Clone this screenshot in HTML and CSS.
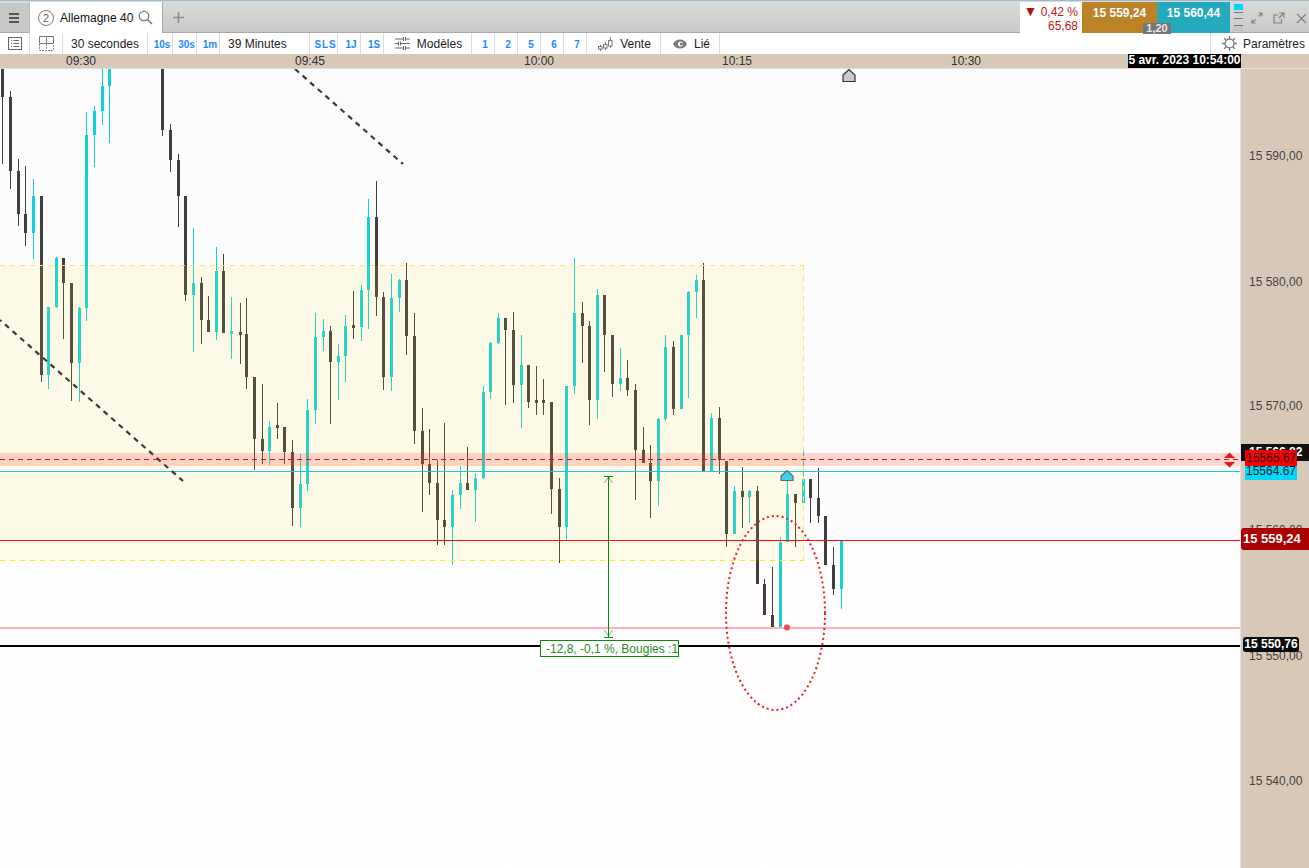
FILE: index.html
```html
<!DOCTYPE html>
<html lang="fr">
<head>
<meta charset="utf-8">
<title>Allemagne 40</title>
<link rel="stylesheet" href="styles.css">
</head>
<body>
<div class="app">
  <header class="tabbar">
    <button class="menu" aria-label="Menu">
      <svg width="10" height="10" viewBox="0 0 10 10"><path d="M0 1H10M0 5H10M0 9H10" stroke="#555" stroke-width="2"/></svg>
    </button>
    <div class="tab">
      <span class="tab-num">2</span>
      <span class="tab-name">Allemagne 40</span>
      <svg class="tab-search" width="15" height="15" viewBox="0 0 15 15"><circle cx="6" cy="6" r="4.7" fill="none" stroke="#777" stroke-width="1.3"/><path d="M9.5 9.5L14 14" stroke="#777" stroke-width="1.5"/></svg>
    </div>
    <svg class="tab-add" width="11" height="11" viewBox="0 0 11 11"><path d="M5.5 0V11M0 5.5H11" stroke="#8f8f8f" stroke-width="1.6"/></svg>
    <div class="quote">
      <div class="change"><span><span class="down">▼</span> 0,42 %</span><span>65,68</span></div>
      <div class="bid">15 559,24</div>
      <div class="ask">15 560,44</div>
      <div class="spread">1,20</div>
    </div>
    <div class="levels"><i class="lv-on"></i><i class="lv-a"></i><i class="lv-b"></i><i class="lv-c"></i><i class="lv-end"></i></div>
    <div class="winbtns">
      <svg width="12" height="12" viewBox="0 0 12 12"><path d="M1 11L4.5 7.5M11 1L7.5 4.5M1 7.5V11H4.5M7.5 1H11V4.5" fill="none" stroke="#808080" stroke-width="1.1"/></svg>
      <svg width="12" height="12" viewBox="0 0 12 12"><path d="M8.5 7V11H1V3H5M6 1H11V6M11 1L6 6" fill="none" stroke="#808080" stroke-width="1.1"/></svg>
      <svg width="12" height="12" viewBox="0 0 12 12"><path d="M2 2L11 11M11 2L2 11" stroke="#808080" stroke-width="1.2"/></svg>
    </div>
  </header>

  <nav class="toolbar">
    <div class="cell w30"><svg width="14" height="13" viewBox="0 0 14 13"><rect x=".5" y=".5" width="13" height="12" fill="none" stroke="#666"/><path d="M3 3.5H4M5.5 3.5H11M3 6.500H4M5.5 6.500H11M3 9.500H4M5.5 9.500H11" stroke="#666"/></svg></div>
    <div class="cell w33"><svg width="15" height="15" viewBox="0 0 15 15"><path d="M.5 7.500V.5H7.500V7.500H.5M7.500 .5H14.500V7.500H7.500" fill="none" stroke="#777"/><path d="M.5 8V14.500H14.500V8M7.500 8V14" fill="none" stroke="#888" stroke-dasharray="2 1"/></svg></div>
    <div class="cell w85">30 secondes</div>
    <div class="cell w25 blue">10s</div>
    <div class="cell w24 blue">30s</div>
    <div class="cell w23 blue">1m</div>
    <div class="cell w90">39 Minutes</div>
    <div class="cell w28 blue sls">SLS</div>
    <div class="cell w23 blue">1J</div>
    <div class="cell w23 blue">1S</div>
    <div class="cell w88 gap">
      <svg width="15" height="13" viewBox="0 0 15 13"><path d="M0 2H8M11 2H15M0 6.500H3M6 6.500H15M0 11H8M11 11H15" stroke="#666"/><path d="M8.500 0V4M10.500 0V4M3.500 4.500V8.500M5.500 4.500V8.500M8.500 9V13M10.500 9V13" stroke="#666"/></svg>
      <span>Modèles</span>
    </div>
    <div class="cell w23 blue">1</div>
    <div class="cell w23 blue">2</div>
    <div class="cell w23 blue">5</div>
    <div class="cell w23 blue">6</div>
    <div class="cell w23 blue">7</div>
    <div class="cell w74 gap">
      <svg width="15" height="14" viewBox="0 0 15 14"><path d="M2.500 8V9M2.500 12V14M7.500 5V7M7.500 11V13M12.500 0V3M12.500 9V11" stroke="#777"/><rect x=".5" y="9.500" width="3.500" height="2.500" fill="none" stroke="#777"/><rect x="5.500" y="7.500" width="3.500" height="3.500" fill="none" stroke="#777"/><rect x="10.500" y="3.500" width="3.500" height="5.500" fill="none" stroke="#777"/></svg>
      <span>Vente</span>
    </div>
    <div class="cell w59 gap">
      <svg width="14" height="10" viewBox="0 0 14 10"><path d="M0 5C3 -1 11 -1 14 5C11 11 3 11 0 5Z" fill="#777"/><circle cx="7.500" cy="5" r="2.600" fill="#fff"/><circle cx="8.300" cy="5" r="1.500" fill="#777"/></svg>
      <span>Lié</span>
    </div>
    <div class="toolbar-fill"></div>
    <div class="cell settings">
      <svg width="15" height="15" viewBox="0 0 15 15"><circle cx="7.500" cy="7.500" r="4.400" fill="none" stroke="#777" stroke-width="1.300"/><path d="M7.500 0V3M7.500 12V15M0 7.500H3M12 7.500H15M2.200 2.200L4.200 4.200M10.800 10.800L12.800 12.800M2.200 12.800L4.200 10.800M10.800 4.200L12.800 2.200" stroke="#777" stroke-width="1.300"/></svg>
      <span>Paramètres</span>
    </div>
  </nav>

  <div class="timeaxis">
    <span class="tick t1">09:30</span>
    <span class="tick t2">09:45</span>
    <span class="tick t3">10:00</span>
    <span class="tick t4">10:15</span>
    <span class="tick t5">10:30</span>
    <span class="cursor-date">5 avr. 2023 10:54:00</span>
  </div>

  <main class="chart">
    <div class="plot">
      <svg class="plot-svg" width="1241" height="799" viewBox="0 69 1241 799">
        <!-- ellipse fill -->
        <ellipse cx="775.500" cy="613" rx="49.500" ry="97" fill="#fffcfe"/>
        <g shape-rendering="crispEdges" fill="none">
          <!-- wicks -->
          <path stroke="#423e40" d="M2.500 69V164M10.500 91V189M18.500 159V226M25.500 166V246M41.500 196V382M63.500 258V339M71.500 283V401M162.500 69V136M170.500 124V172M178.500 154V227M185.500 196V301M201.500 277V344M208.500 296V332M223.500 254V333M240.500 303V364M246.500 298V389M254.500 377V470M262.500 384V464M277.500 403V439M284.500 427V464M292.500 440V526M330.500 326V424M353.500 291V339M376.500 181V316M383.500 292V390M406.500 263V355M414.500 313V444M422.500 408V512M429.500 429V495M437.500 460V545M444.500 423V545M467.500 447V490M505.500 318V405M513.500 312V403M528.500 365V408M536.500 366V415M543.500 379V415M551.500 402V514M559.500 478V563M582.500 302V363M589.500 321V425M604.500 295V372M612.500 335V397M627.500 360V396M635.500 384V500M643.500 427V463M650.500 445V518M673.500 341V415M703.500 263V471M719.500 407V474M726.500 461V547M742.500 467V528M757.500 486V584M764.500 579V615M772.500 567V628M795.500 494V547M810.500 479V523M818.500 468V523M825.500 516V565M833.500 547V595"/>
          <path stroke="#12d0da" d="M33.500 179V259M48.500 375V389M56.500 257V308M79.500 307V402M86.500 112V321M94.500 106V167M102.500 69V125M109.500 69V143M193.500 228V352M216.500 247V340M231.500 297V359M269.500 421V465M300.500 454V527M307.500 399V491M315.500 313V424M323.500 319V351M338.500 344V400M345.500 315V382M361.500 285V341M368.500 199V329M391.500 274V391M399.500 279V312M452.500 490V565M460.500 466V509M475.500 473V522M483.500 386V479M490.500 342V399M498.500 313V344M521.500 335V428M566.500 386V540M574.500 258V394M597.500 289V419M620.500 348V391M658.500 418V506M665.500 335V421M681.500 335V409M688.500 291V398M696.500 275V318M711.500 413V471M734.500 486V534M749.500 490V523M780.500 537V628M787.500 480V542M803.500 449V503M841.500 541V609"/>
          <!-- bodies -->
          <path stroke="#423e40" stroke-width="3" d="M2.500 69V97M10.500 97V171M18.500 171V214M25.500 214V233M41.500 196V375M63.500 258V283M71.500 283V363M162.500 69V130M170.500 130V160M178.500 160V196M185.500 196V295M201.500 283V320M208.500 320V332M223.500 271V333M246.500 334V377M254.500 377V439M262.500 439V451M284.500 427V452M292.500 452V508M330.500 331V362M376.500 217V297M383.500 297V377M406.500 280V336M414.500 336V431M422.500 431V464M429.500 464V483M437.500 483V520M444.500 520V527M467.500 483V490M505.500 318V330M513.500 330V385M528.500 365V402M551.500 402V489M559.500 489V527M582.500 313V326M589.500 326V400M604.500 295V335M612.500 335V384M627.500 378V390M635.500 390V450M643.500 450V463M650.500 463V481M673.500 347V409M703.500 280V471M719.500 418V460M726.500 461V534M742.500 491V497M757.500 491V584M764.500 584V615M772.500 615V628M795.500 494V503M810.500 479V498M818.500 498V516M825.500 516V565M833.500 565V589M239 333.500H242M276 426.500H279M352 326.500H355M535 401.500H538M542 401.500H545"/>
          <path stroke="#12d0da" stroke-width="3" d="M33.500 196V233M48.500 307V375M56.500 258V307M79.500 308V363M86.500 135V308M94.500 111V135M102.500 86V111M109.500 69V86M193.500 283V295M216.500 271V332M269.500 427V451M300.500 484V508M307.500 410V484M315.500 337V410M323.500 331V337M338.500 356V362M345.500 326V356M361.500 290V327M368.500 217V290M391.500 298V377M399.500 280V298M452.500 495V527M460.500 483V495M475.500 478V490M483.500 392V478M490.500 343V392M498.500 318V343M521.500 365V385M566.500 386V527M574.500 313V386M597.500 295V400M620.500 378V384M658.500 419V481M665.500 347V419M681.500 335V409M688.500 292V335M696.500 280V292M711.500 418V471M734.500 491V534M749.500 491V497M780.500 542V628M787.500 494V542M803.500 479V503M841.500 541V589M230 332.500H233"/>
          <!-- highlighted zone -->
          <rect x="0" y="265.500" width="803.500" height="295" fill="rgba(252,240,46,.1)"/>
          <path stroke="#fbe75c" stroke-dasharray="5 5" d="M0 265.500H804M803.500 266V560"/>
          <path stroke="#ffe61a" stroke-dasharray="5 5" d="M0 560.500H804"/>
          <!-- levels -->
          <rect x="0" y="453" width="1241" height="13" fill="rgba(255,60,50,.2)"/>
          <path stroke="#e01010" stroke-dasharray="5 4" d="M0 459.500H1241"/>
          <path stroke="#18cbe0" d="M0 471.500H1241"/>
          <path stroke="#f81000" d="M0 540.500H1241"/>
          <path stroke="#ffb0b4" stroke-width="2" d="M0 628H1241"/>
          <path stroke="#000" stroke-width="2" d="M0 646H1241"/>
        </g>
        <!-- trend lines -->
        <path d="M0 320L183 481" stroke="#3a3a3a" stroke-width="2.200" stroke-dasharray="5.300 4.800" stroke-dashoffset="3.450" fill="none"/>
        <path d="M295 69L403 164" stroke="#3a3a3a" stroke-width="2.200" stroke-dasharray="5.300 4.800" fill="none"/>
        <!-- measure tool -->
        <g fill="none" stroke="#0a8a0a">
          <path shape-rendering="crispEdges" d="M608.500 476V637M604 476.500H613M604 637.500H613"/>
          <path stroke-opacity=".6" d="M604.500 483L608.500 477L612.500 483M604.500 630L608.500 636L612.500 630"/>
        </g>
        <!-- ellipse outline and markers -->
        <ellipse cx="775.500" cy="613" rx="49.500" ry="97" fill="none" stroke="#f01828" stroke-width="2" stroke-dasharray="2 3"/>
        <circle cx="787" cy="627.500" r="3" fill="#f74650"/>
        <path d="M781 480.500V476L787 470.500L793 476V480.500Z" fill="#3fd0ee" stroke="#5c6b73" stroke-width="1.200"/>
        <path d="M843 81.500V75L849 69.500L855 75V81.500Z" fill="#c9c9c9" stroke="#333" stroke-width="1.200"/>
        <path d="M1229.500 452.500L1235 458H1224ZM1229.500 467.500L1235 462H1224Z" fill="#e01a1a"/>
      </svg>
      <div class="measure-label">-12,8, -0,1 %, Bougies :1</div>
    </div>
    <aside class="priceaxis">
      <span class="price p590">15 590,00</span>
      <span class="price p580">15 580,00</span>
      <span class="price p570">15 570,00</span>
      <span class="price p560">15 560,00</span>
      <span class="price p550">15 550,00</span>
      <span class="price p540">15 540,00</span>
      <span class="tag-black">15 566,82</span>
      <span class="tag-cyan">15564.67</span>
      <span class="tag-red">15565.67</span>
      <span class="tag-last">15 559,24</span>
      <span class="tag-low">15 550,76</span>
    </aside>
  </main>
</div>
</body>
</html>
```

FILE: styles.css
```css
* { box-sizing: border-box; }
html, body { margin: 0; padding: 0; }
body { font-family: "Liberation Sans", Arial, sans-serif; font-size: 12px; color: #222; overflow: hidden; background: #fff; }
svg { display: block; }

.app { width: 1309px; height: 868px; display: flex; flex-direction: column; }

/* Tab bar */
.tabbar {
  height: 33px; flex: none; display: flex; align-items: stretch; position: relative;
  padding-top: 2px;
  border-top: 1px solid #9dbccb; border-bottom: 1px solid #a9a9a9;
  background: linear-gradient(#dadada, #c9c9c9);
}
.menu {
  width: 29px; padding: 0 0 0 9px; border: 0; background: #c8c8c8;
  display: flex; align-items: center;
}
.tab {
  width: 134px; background: #fff; display: flex; align-items: center;
  margin-top: -1px; margin-bottom: -1px;
  padding-left: 8px; border-left: 1px solid #bbb; border-right: 1px solid #aaa;
}
.tab-num {
  width: 16px; height: 16px; border: 1.3px solid #777; border-radius: 50%;
  font-size: 11px; line-height: 14px; text-align: center; color: #666; flex: none;
}
.tab-name { margin-left: 6px; color: #111; white-space: nowrap; }
.tab-search { margin-left: 5px; flex: none; }
.tab-add { align-self: center; margin-left: 10px; }

.quote { margin-left: auto; display: flex; position: relative; margin-bottom: -1px; margin-top: -1px; }
.change {
  width: 62px; background: #fff; display: flex; flex-direction: column; align-items: flex-end;
  padding: 3px 4px 0 0; color: #c0181c; line-height: 14px;
}
.down { color: #b01010; font-size: 14px; line-height: 12px; }
.bid, .ask {
  color: #fff; font-weight: bold; display: flex; justify-content: center;
  padding-top: 4px; line-height: 14px;
}
.bid { width: 75px; background: #bb8227; }
.ask { width: 73px; background: #24a9bd; }
.spread {
  position: absolute; left: 123px; bottom: -1px; width: 28px; height: 11px;
  background: #767676; color: #e8e8e8; font-size: 11px; font-weight: bold;
  line-height: 11px; text-align: center; border-radius: 2px 2px 0 0;
}
.levels { width: 9px; margin-left: 4px; display: flex; flex-direction: column; padding-top: 1px; }
.levels i { display: block; height: 1px; background: #777; flex: none; }
.levels .lv-on { height: 6px; background: #00d6f6; }
.levels .lv-a { margin-top: 2px; }
.levels .lv-b { margin-top: 5px; }
.levels .lv-c { margin-top: 6px; }
.levels .lv-end { height: 5px; background: #c4c4c4; }
.winbtns { flex: none; width: 66px; display: flex; align-items: center; gap: 10px; padding-left: 8px; }

/* Toolbar */
.toolbar { height: 21px; flex: none; display: flex; background: #fff; }
.cell {
  flex: none; display: flex; align-items: center; justify-content: center;
  border-right: 1px solid #dcdcdc; color: #222; white-space: nowrap;
}
.w30 { width: 30px; padding-left: 1px; }
.w33 { width: 33px; padding-left: 1px; }
.w85 { width: 85px; }
.w25 { width: 25px; }
.w24 { width: 24px; }
.w23 { width: 23px; }
.w90 { width: 90px; justify-content: flex-start; padding-left: 8px; }
.w28 { width: 28px; }
.w88 { width: 88px; padding-left: 2px; }
.w74 { width: 74px; padding-left: 2px; }
.w59 { width: 59px; padding-left: 3px; }
.gap { gap: 7px; }
.blue { color: #1e88ff; font-size: 10px; font-weight: bold; padding: 2px 0 0 4px; }
.sls { letter-spacing: .8px; }
.toolbar-fill { flex: 1; }
.settings { border-right: 0; border-left: 1px solid #dcdcdc; width: 99px; gap: 6px; justify-content: flex-start; padding-left: 11px; }

/* Time axis */
.timeaxis { height: 14px; flex: none; background: #d8c8b8; position: relative; color: #333; line-height: 14px; }
.tick { position: absolute; top: 0; width: 40px; text-align: center; }
.t1 { left: 61px; }
.t2 { left: 290px; }
.t3 { left: 519px; }
.t4 { left: 717px; }
.t5 { left: 946px; }
.cursor-date {
  position: absolute; left: 1128px; top: 0; width: 113px; height: 14px;
  background: #000; color: #fff; font-weight: bold; text-align: center; line-height: 13px; white-space: nowrap;
}

/* Chart */
.chart { flex: 1; display: flex; min-height: 0; }
.plot {
  width: 1241px; flex: none; position: relative;
  background: linear-gradient(#fbfbfb, #fdfdfd 60%, #fff);
  border-top: 1px solid #dedede;
}
.plot-svg { position: absolute; left: 0; top: 0; }
.plot::after { content: ""; position: absolute; top: 0; bottom: 0; right: 0; width: 1px; background: #e2e2e2; }
.measure-label {
  position: absolute; left: 540px; top: 571px; width: 139px; height: 17px;
  border: 1px solid #0a8a0a; background: #fff; color: #2a8a2a;
  line-height: 17px; padding-left: 5px; white-space: nowrap; overflow: hidden;
}
.priceaxis { flex: 1; background: #d8c8b8; position: relative; border-top: 1px solid #dedede; }
.price { position: absolute; left: 8px; color: #444; line-height: 14px; white-space: nowrap; }
.p590 { top: 80px; }
.p580 { top: 206px; }
.p570 { top: 330px; }
.p560 { top: 454px; }
.p550 { top: 580px; }
.p540 { top: 705px; }
.tag-black {
  position: absolute; left: 0; top: 375px; width: 68px; height: 17px;
  background: #111; color: #fff; font-weight: bold; line-height: 17px; padding-left: 8px; white-space: nowrap;
}
.tag-cyan {
  position: absolute; left: 4px; top: 396px; width: 52px; height: 15px;
  background: #00d8fa; color: #222; line-height: 12px; text-align: center;
}
.tag-red {
  position: absolute; left: 4px; top: 381px; width: 52px; height: 16px;
  background: #f70000; color: #222; line-height: 16px; text-align: center;
}
.tag-last {
  position: absolute; left: 0; top: 459px; width: 68px; height: 22px;
  background: #aa0000; color: #fff; font-weight: bold; font-size: 13px; line-height: 22px;
  padding-left: 2px; border-radius: 3px 0 0 3px; white-space: nowrap;
}
.tag-low {
  position: absolute; left: 2px; top: 568px; width: 56px; height: 15px;
  background: #0a0a0a; color: #fff; font-weight: bold; line-height: 15px; text-align: center;
  border-radius: 3px; white-space: nowrap;
}
```
